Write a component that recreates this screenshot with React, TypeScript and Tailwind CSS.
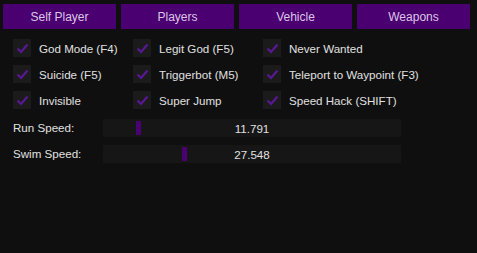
import React from "react";

const font = { fontFamily: '"Liberation Sans", Arial, sans-serif' };

function Check() {
  return (
    <div className="w-[18px] h-[18px] bg-[#1b1b1b] flex items-center justify-center shrink-0">
      <svg width="13" height="11" viewBox="0 0 13 11">
        <polyline points="1.5,5.5 5,9 11.5,1.5" fill="none" stroke="#5a1796" strokeWidth="2.2" />
      </svg>
    </div>
  );
}

function Item({ label, w }: { label: string; w: string }) {
  return (
    <div className={`flex items-center gap-[8px] ${w}`}>
      <Check />
      <span className="text-[#e0e0e0] text-[11.6px] leading-none whitespace-nowrap pt-[2px]">{label}</span>
    </div>
  );
}

function Slider({ label, value, pos }: { label: string; value: string; pos: number }) {
  return (
    <div className="flex items-center h-[18px]">
      <span className="w-[90px] text-[#e0e0e0] text-[11.6px] leading-none">{label}</span>
      <div className="relative w-[298px] h-[18px] bg-[#161616] flex items-center justify-center">
        <div className="absolute top-[2px] w-[5px] h-[14px] bg-[#4a0072]" style={{ left: pos }} />
        <span className="relative text-[#e0e0e0] text-[11.6px] leading-none pt-[1px]">{value}</span>
      </div>
    </div>
  );
}

export default function App() {
  const tabs = ["Self Player", "Players", "Vehicle", "Weapons"];
  return (
    <div className="w-[477px] h-[253px] bg-[#0f0f0f] pl-[3px] pt-[4px]" style={font}>
      <div className="flex gap-[5px] w-[467px]">
        {tabs.map((t) => (
          <div key={t} className="flex-1 h-[25px] bg-[#4a0070] flex items-center justify-center text-[#dcc6e8] text-[12px]">
            {t}
          </div>
        ))}
      </div>
      <div className="pl-[10px] pt-[10px] flex flex-col gap-[8px]">
        <div className="flex">
          <Item label="God Mode (F4)" w="w-[120px]" />
          <Item label="Legit God (F5)" w="w-[130px]" />
          <Item label="Never Wanted" w="w-[150px]" />
        </div>
        <div className="flex">
          <Item label="Suicide (F5)" w="w-[120px]" />
          <Item label="Triggerbot (M5)" w="w-[130px]" />
          <Item label="Teleport to Waypoint (F3)" w="w-[150px]" />
        </div>
        <div className="flex">
          <Item label="Invisible" w="w-[120px]" />
          <Item label="Super Jump" w="w-[130px]" />
          <Item label="Speed Hack (SHIFT)" w="w-[150px]" />
        </div>
        <div className="mt-[2px]">
          <Slider label="Run Speed:" value="11.791" pos={33} />
        </div>
        <Slider label="Swim Speed:" value="27.548" pos={79} />
      </div>
    </div>
  );
}
